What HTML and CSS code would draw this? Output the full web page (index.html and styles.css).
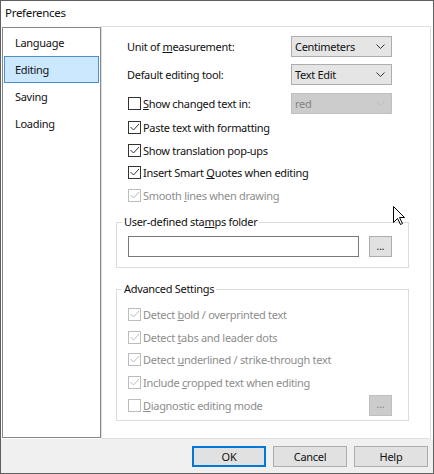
FILE: index.html
```html
<!DOCTYPE html>
<html>
	<head>
		<meta charset="utf-8">
		<title>Preferences</title>
		<link rel="stylesheet" href="styles.css">
	</head>
	<body>
		<div class="window">
			<div class="titlebar">Preferences</div>
			<div class="main">
				<!-- 左侧分类列表 -->
				<ul class="cats">
					<li>Language</li>
					<li class="sel">Editing</li>
					<li>Saving</li>
					<li>Loading</li>
				</ul>
				<!-- 右侧设置面板 -->
				<div class="panel">
					<div class="row first">
						<span class="lbl"><span>Unit of <u>m</u>easurement:</span></span>
						<div class="combo">Centimeters<svg class="chev" width="9" height="5" viewBox="0 0 9 5"><path d="M0.5 0.5 L4.5 4.5 L8.5 0.5" fill="none" stroke="#333" /></svg></div>
					</div>
					<div class="row second">
						<span class="lbl"><span>Default editing tool:</span></span>
						<div class="combo">Text Edit<svg class="chev" width="9" height="5" viewBox="0 0 9 5"><path d="M0.5 0.5 L4.5 4.5 L8.5 0.5" fill="none" stroke="#333" /></svg></div>
					</div>
					<div class="row third">
						<span class="lbl"><span class="cb"></span><span><u>S</u>how changed text in:</span></span>
						<div class="combo off">red<svg class="chev" width="9" height="5" viewBox="0 0 9 5"><path d="M0.5 0.5 L4.5 4.5 L8.5 0.5" fill="none" stroke="#bcbcbc" /></svg></div>
					</div>
					<div class="checks">
						<div class="chk"><span class="cb on"><svg width="11" height="11" viewBox="0 0 11 11"><path d="M1.5 5 L4.5 8 L10 2" fill="none" stroke="#333" /></svg></span><span>Paste text with formatting</span></div>
						<div class="chk"><span class="cb on"><svg width="11" height="11" viewBox="0 0 11 11"><path d="M1.5 5 L4.5 8 L10 2" fill="none" stroke="#333" /></svg></span><span>Show translation pop-ups</span></div>
						<div class="chk"><span class="cb on"><svg width="11" height="11" viewBox="0 0 11 11"><path d="M1.5 5 L4.5 8 L10 2" fill="none" stroke="#333" /></svg></span><span>Insert Smart <u>Q</u>uotes when editing</span></div>
						<div class="chk dis"><span class="cb on"><svg width="11" height="11" viewBox="0 0 11 11"><path d="M1.5 5 L4.5 8 L10 2" fill="none" stroke="#bcbcbc" /></svg></span><span>Smooth <u>l</u>ines when drawing</span></div>
					</div>
					<fieldset class="grp stamps">
						<legend>User-defined sta<u>m</u>ps folder</legend>
						<div class="pathrow">
							<input type="text" class="path" />
							<span class="btn dots">...</span>
						</div>
					</fieldset>
					<fieldset class="grp adv">
						<legend>Advanced Settings</legend>
						<div class="advbody">
							<div class="chk dis"><span class="cb on"><svg width="11" height="11" viewBox="0 0 11 11"><path d="M1.5 5 L4.5 8 L10 2" fill="none" stroke="#bcbcbc" /></svg></span><span>Detect <u>b</u>old / overprinted text</span></div>
							<div class="chk dis"><span class="cb on"><svg width="11" height="11" viewBox="0 0 11 11"><path d="M1.5 5 L4.5 8 L10 2" fill="none" stroke="#bcbcbc" /></svg></span><span>Detect <u>t</u>abs and leader dots</span></div>
							<div class="chk dis"><span class="cb on"><svg width="11" height="11" viewBox="0 0 11 11"><path d="M1.5 5 L4.5 8 L10 2" fill="none" stroke="#bcbcbc" /></svg></span><span>Detect <u>u</u>nderlined / strike-through text</span></div>
							<div class="chk dis"><span class="cb on"><svg width="11" height="11" viewBox="0 0 11 11"><path d="M1.5 5 L4.5 8 L10 2" fill="none" stroke="#bcbcbc" /></svg></span><span>Include <u>c</u>ropped text when editing</span></div>
							<div class="chk dis"><span class="cb"></span><span><u>D</u>iagnostic editing mode</span><span class="btn dots off">...</span></div>
						</div>
					</fieldset>
				</div>
			</div>
			<div class="footer">
				<span class="btn big def">OK</span>
				<span class="btn big">Cancel</span>
				<span class="btn big">Help</span>
			</div>
			<!-- 鼠标指针 -->
			<svg class="cursor" width="13" height="20" viewBox="0 0 13 20"><path d="M0.5 0.5 L0.5 16.5 L4.5 12.5 L7.5 18.5 L9.5 17.5 L6.5 11.5 L11.5 11.5 Z" fill="#fff" stroke="#000" /></svg>
		</div>
	</body>
</html>
```

FILE: styles.css
```css
body{
	margin: 0;
	font-family: "Segoe UI", "Noto Sans", sans-serif;
	font-size: 11px;
	letter-spacing: -0.3px;
	color: #111;
}
.window{
	position: relative;
	width: 434px;
	height: 474px;
	box-sizing: border-box;
	border: 1px solid #5f5f5f;
	background: #f0f0f0;
	display: flex;
	flex-direction: column;
}
.titlebar{
	height: 25px;
	line-height: 24px;
	padding-left: 4px;
	background: #fff;
	font-size: 11.5px;
}
.main{
	display: flex;
	height: 413px;
	background: #fff;
}
.cats{
	list-style: none;
	margin: 1px 0 0 1px;
	padding: 1px 0 0 0;
	width: 99px;
	height: 411px;
	box-sizing: border-box;
	border: 1px solid #828790;
	background: #fff;
}
.cats li{
	height: 27px;
	line-height: 25px;
	margin-left: 1px;
	width: 95px;
	box-sizing: border-box;
	padding-left: 10px;
	border: 1px solid transparent;
}
.cats li.sel{
	background: #cce8ff;
	border-color: #4d8fcf;
}
.panel{
	width: 330px;
	height: 413px;
	box-sizing: border-box;
	border: 1px solid #dfdfdf;
	padding-top: 9px;
}
.row{
	display: flex;
	align-items: center;
	height: 21px;
	padding-left: 25px;
}
.row.second{
	margin-top: 7px;
}
.row.third{
	margin-top: 8px;
}
.lbl{
	width: 164px;
	display: flex;
	align-items: center;
}
.row.third .lbl{
	margin-left: 1px;
	width: 163px;
}
.combo{
	width: 101px;
	height: 21px;
	box-sizing: border-box;
	border: 1px solid #adadad;
	background: #e5e5e5;
	padding-left: 3px;
	line-height: 19px;
}
.combo.off{
	background: #cccccc;
	border-color: #bfbfbf;
	color: #838383;
}
.chev{
	float: right;
	margin: 7px 6px 0 0;
}
.checks{
	margin-top: 2px;
	padding-left: 26px;
}
.chk{
	display: flex;
	align-items: center;
	height: 22.75px;
}
.chk.dis{
	color: #8d8d8d;
}
.cb{
	width: 13px;
	height: 13px;
	box-sizing: border-box;
	border: 1px solid #333;
	background: #fff;
	margin-right: 2px;
	flex: none;
}
.cb svg{
	display: block;
}
.chk.dis .cb{
	border-color: #bcbcbc;
}
.grp{
	margin: 7px 21px 0 14px;
	padding: 0;
	border: 1px solid #dcdcdc;
}
.grp legend{
	margin-left: 5px;
	padding: 0 2px;
	line-height: 16px;
}
.pathrow{
	display: flex;
	align-items: center;
	margin: 6px 0 10px 11px;
}
.path{
	width: 231px;
	height: 21px;
	box-sizing: border-box;
	border: 1px solid #7a7a7a;
	margin: 0;
	padding: 0;
}
.btn{
	display: inline-flex;
	align-items: center;
	justify-content: center;
	box-sizing: border-box;
	border: 1px solid #adadad;
	background: #e1e1e1;
}
.dots{
	width: 23px;
	height: 21px;
	margin-left: 10px;
	font-size: 10px;
	letter-spacing: 0;
	line-height: 1;
	padding-bottom: 2px;
}
.dots.off{
	margin-left: auto;
	margin-right: 16px;
	background: #cccccc;
	border-color: #bfbfbf;
	color: #838383;
}
.adv{
	margin-top: 13px;
}
.advbody{
	padding: 6px 0 3px 11px;
}
.footer{
	flex: 1;
	display: flex;
	justify-content: flex-end;
	align-items: flex-start;
	gap: 7px;
	padding: 7px 5px 0 0;
}
.big{
	width: 74px;
	height: 21px;
}
.big.def{
	border: 2px solid #0078d7;
}
.cursor{
	position: absolute;
	left: 392px;
	top: 205px;
}
```
